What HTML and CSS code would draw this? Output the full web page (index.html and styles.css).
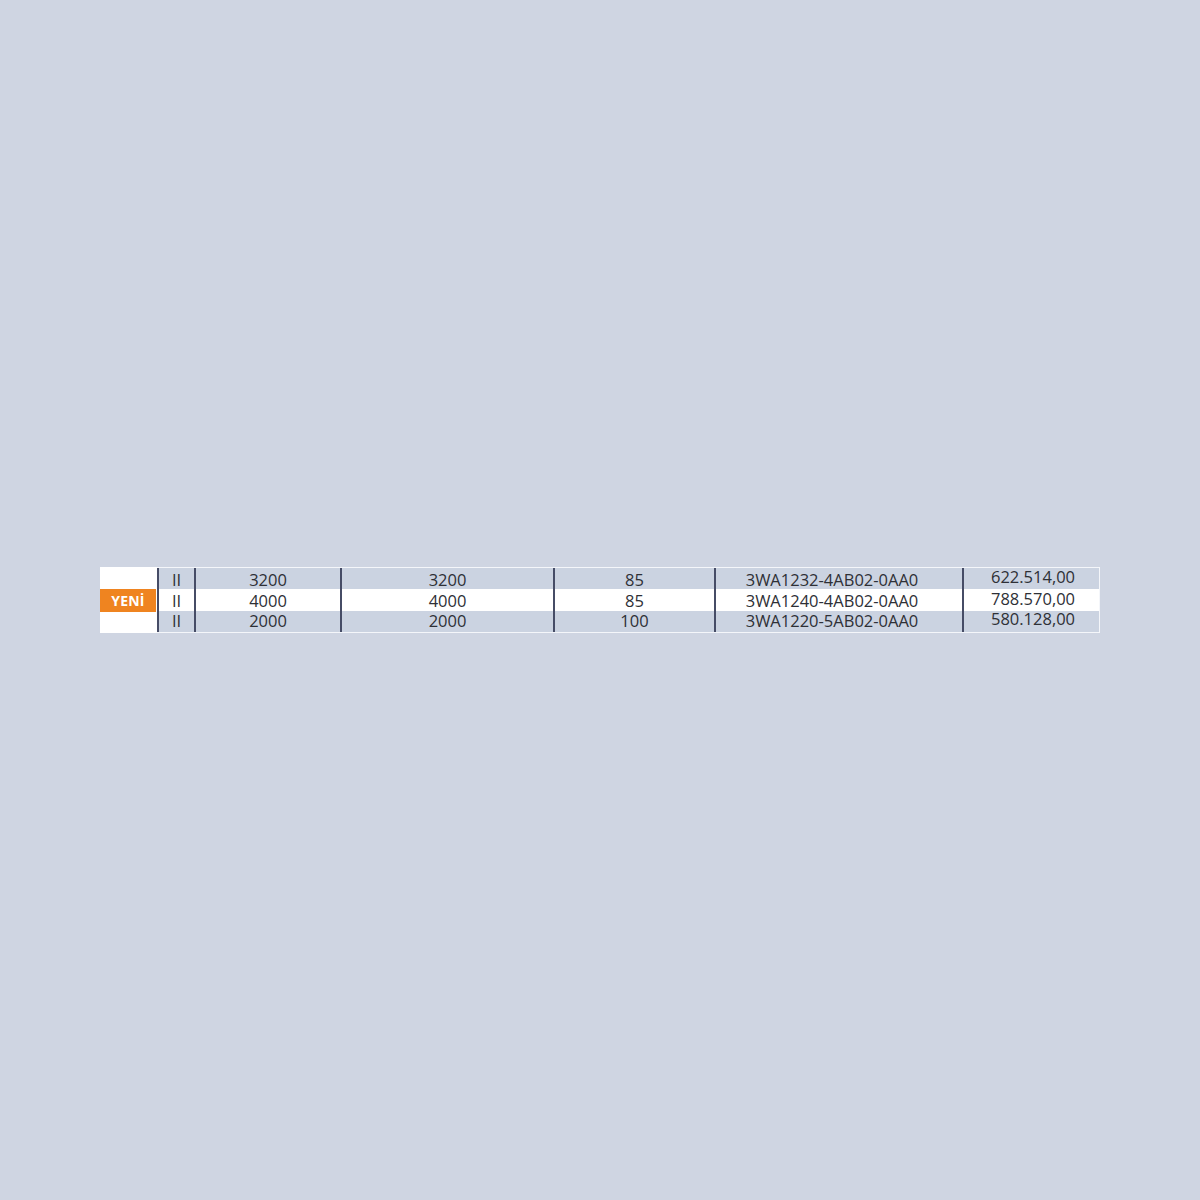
FILE: index.html
```html
<!DOCTYPE html>
<html lang="tr">
<head>
<meta charset="utf-8">
<title>Tablo</title>
<link rel="stylesheet" href="styles.css">
</head>
<body>
<div class="page">
  <div class="table">
    <div class="tag"><span class="badge">YENİ</span></div>
    <div class="rows">
      <div class="row r1">
        <div class="c c1">II</div>
        <div class="c c2">3200</div>
        <div class="c c3">3200</div>
        <div class="c c4">85</div>
        <div class="c c5">3WA1232-4AB02-0AA0</div>
        <div class="c c6">622.514,00</div>
      </div>
      <div class="row r2">
        <div class="c c1">II</div>
        <div class="c c2">4000</div>
        <div class="c c3">4000</div>
        <div class="c c4">85</div>
        <div class="c c5">3WA1240-4AB02-0AA0</div>
        <div class="c c6">788.570,00</div>
      </div>
      <div class="row r3">
        <div class="c c1">II</div>
        <div class="c c2">2000</div>
        <div class="c c3">2000</div>
        <div class="c c4">100</div>
        <div class="c c5">3WA1220-5AB02-0AA0</div>
        <div class="c c6">580.128,00</div>
      </div>
    </div>
  </div>
</div>
</body>
</html>
```

FILE: styles.css
```css
html, body {
  margin: 0;
  padding: 0;
}
body {
  background: #cfd5e2;
  font-family: "Open Sans", "Liberation Sans", sans-serif;
}
.page {
  width: 1200px;
  height: 1200px;
  display: flex;
  align-items: center;
  justify-content: center;
}
.table {
  width: 1000px;
  display: flex;
}
.tag {
  width: 57px;
  background: #ffffff;
  display: flex;
  align-items: center;
}
.badge {
  width: 56px;
  height: 23px;
  background: #ef8420;
  color: #ffffff;
  font-weight: 700;
  font-size: 14px;
  line-height: 23px;
  text-align: center;
  letter-spacing: 0.2px;
}
.rows {
  flex: 1;
  display: flex;
  flex-direction: column;
  border-top: 1px solid #f4f6fa;
  border-bottom: 1px solid #f4f6fa;
  border-right: 1px solid #f4f6fa;
}
.row {
  display: flex;
  height: 21px;
  background: #cbd3e1;
}
.row.r2 {
  height: 22px;
  background: #ffffff;
}
.c {
  display: flex;
  align-items: center;
  justify-content: center;
  box-sizing: border-box;
  font-size: 16.5px;
  line-height: 16px;
  color: #2e3036;
  white-space: nowrap;
  border-left: 2px solid #464c66;
}
.r1 .c { padding-top: 3px; }
.r2 .c { padding-top: 1px; }
.r3 .c { padding-bottom: 2px; }
.r1 .c6 { padding-top: 0; padding-bottom: 4px; }
.r2 .c6 { padding-top: 0; padding-bottom: 3px; }
.r3 .c6 { padding-bottom: 5px; }
.c1 { width: 37px; }
.c2 { width: 146px; }
.c3 { width: 213px; }
.c4 { width: 161px; }
.c5 { width: 248px; padding-right: 14px; }
.c6 { flex: 1; padding-left: 3px; }
```
